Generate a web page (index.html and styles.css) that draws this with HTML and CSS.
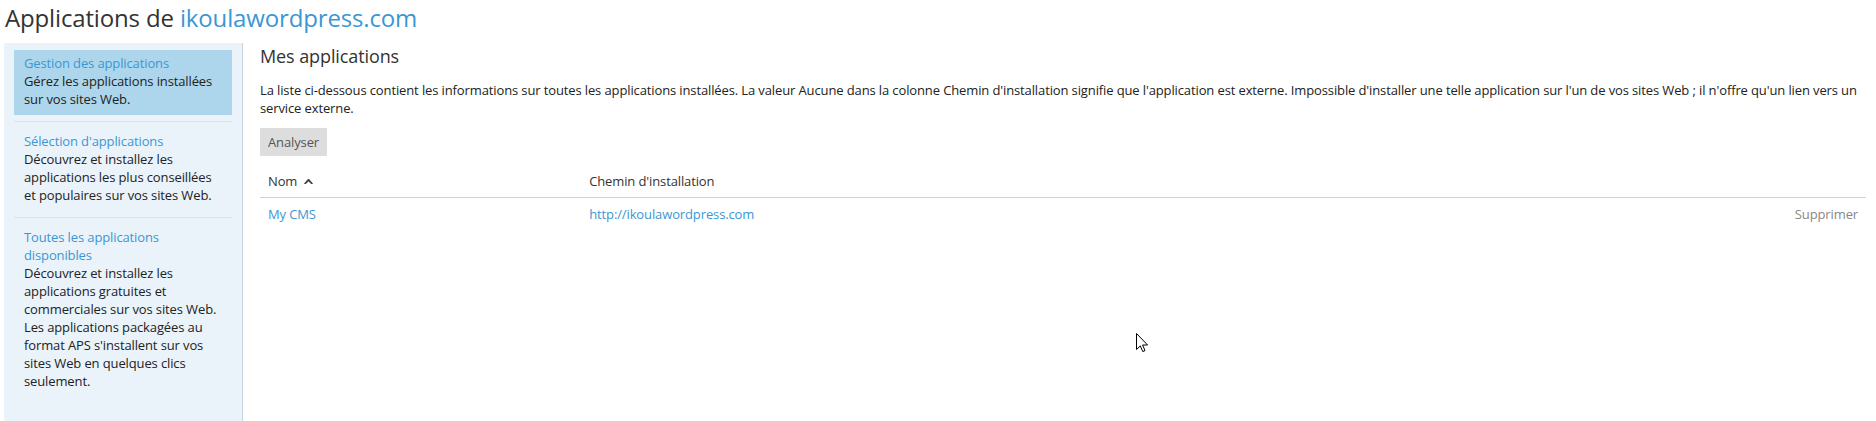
FILE: index.html
```html
<!DOCTYPE html>
<html lang="fr">
<head>
<meta charset="utf-8">
<title>Applications de ikoulawordpress.com</title>
<link rel="stylesheet" href="styles.css">
</head>
<body>
<div class="page">
  <h1 class="page-title">Applications de <a class="link" href="#">ikoulawordpress.com</a></h1>
  <div class="layout">
    <nav class="sidebar">
      <div class="nav-item active">
        <a class="nav-link" href="#">Gestion des applications</a>
        <div class="nav-desc">Gérez les applications installées sur vos sites Web.</div>
      </div>
      <div class="nav-sep"></div>
      <div class="nav-item">
        <a class="nav-link" href="#">Sélection d'applications</a>
        <div class="nav-desc">Découvrez et installez les applications les plus conseillées et populaires sur vos sites Web.</div>
      </div>
      <div class="nav-sep"></div>
      <div class="nav-item">
        <a class="nav-link" href="#">Toutes les applications disponibles</a>
        <div class="nav-desc">Découvrez et installez les applications gratuites et commerciales sur vos sites Web. Les applications packagées au format APS s'installent sur vos sites Web en quelques clics seulement.</div>
      </div>
    </nav>
    <main class="main">
      <h2 class="section-title">Mes applications</h2>
      <p class="intro">La liste ci-dessous contient les informations sur toutes les applications installées. La valeur Aucune dans la colonne Chemin d'installation signifie que l'application est externe. Impossible d'installer une telle application sur l'un de vos sites Web ; il n'offre qu'un lien vers un service externe.</p>
      <button class="btn" type="button">Analyser</button>
      <table class="apps">
        <thead>
          <tr>
            <th class="col-name">Nom <svg class="sort" width="9" height="6" viewBox="0 0 9 6"><path d="M0.5 5.5 L4.5 1 L8.5 5.5 L7 5.5 L4.5 2.8 L2 5.5 Z" fill="#333" stroke="#333" stroke-width="0.8" stroke-linejoin="round"/></svg></th>
            <th class="col-path">Chemin d'installation</th>
            <th class="col-actions"></th>
          </tr>
        </thead>
        <tbody>
          <tr>
            <td><a class="link" href="#">My CMS</a></td>
            <td><a class="link" href="#">http://ikoulawordpress.com</a></td>
            <td class="actions"><span class="action">Supprimer</span></td>
          </tr>
        </tbody>
      </table>
    </main>
  </div>
  <svg class="cursor" width="13" height="20" viewBox="0 0 13 20"><path d="M0.5 0.5 L0.5 16.5 L4.3 12.9 L6.8 18.6 L9 17.6 L6.6 12 L11.6 12 Z" fill="#fff" stroke="#000" stroke-width="1" stroke-linejoin="miter"/></svg>
</div>
</body>
</html>
```
FILE: styles.css
```css
html, body {
  margin: 0;
  padding: 0;
  background: #fff;
}
body {
  font-family: "Open Sans", "Noto Sans", "DejaVu Sans", sans-serif;
  font-size: 13px;
  line-height: 18px;
  letter-spacing: -0.12px;
  color: #333;
}
.page {
  display: flex;
  flex-direction: column;
  height: 100vh;
  position: relative;
  overflow: hidden;
}
.link {
  color: #3b97d3;
  text-decoration: none;
}
.page-title {
  margin: 3px 0 10px 5px;
  font-size: 24px;
  line-height: 30px;
  font-weight: 400;
  letter-spacing: -0.15px;
  color: #333;
}
.layout {
  display: flex;
  flex: 1;
  min-height: 0;
}
.sidebar {
  box-sizing: border-box;
  width: 239px;
  flex: none;
  margin-left: 4px;
  padding: 7px 10px;
  background: #eaf3fa;
  border-right: 1px solid #c9d4dc;
}
.nav-item {
  padding: 4px 10px 7px;
}
.nav-item.active {
  background: #add6ec;
}
.nav-link {
  display: block;
  color: #3b97d3;
  text-decoration: none;
}
.nav-desc {
  color: #222;
}
.nav-sep {
  height: 1px;
  background: #d7e2ea;
  margin: 6px 0;
}
.main {
  flex: 1;
  min-width: 0;
  margin: 0 10px 0 17px;
  padding-top: 1px;
}
.section-title {
  margin: 0;
  font-size: 18px;
  line-height: 24px;
  font-weight: 400;
  letter-spacing: -0.1px;
  color: #333;
}
.intro {
  margin: 13px 0 11px;
  color: #222;
}
.btn {
  display: block;
  height: 28px;
  padding: 0 8px;
  border: 0;
  background: #dddddd;
  color: #555;
  font-family: inherit;
  font-size: 13px;
  letter-spacing: inherit;
  line-height: 28px;
}
.apps {
  width: 100%;
  margin-top: 8px;
  border-collapse: collapse;
}
.apps th {
  font-weight: 400;
  text-align: left;
  padding: 8px 8px 7px;
  border-bottom: 1px solid #d2d2d2;
  color: #333;
}
.apps td {
  padding: 7px 8px;
}
.col-name {
  width: 20%;
}
.sort {
  margin-left: 3px;
  vertical-align: 2px;
}
.actions {
  text-align: right;
}
.action {
  color: #888;
}
.cursor {
  position: absolute;
  left: 1136px;
  top: 333px;
}
```
